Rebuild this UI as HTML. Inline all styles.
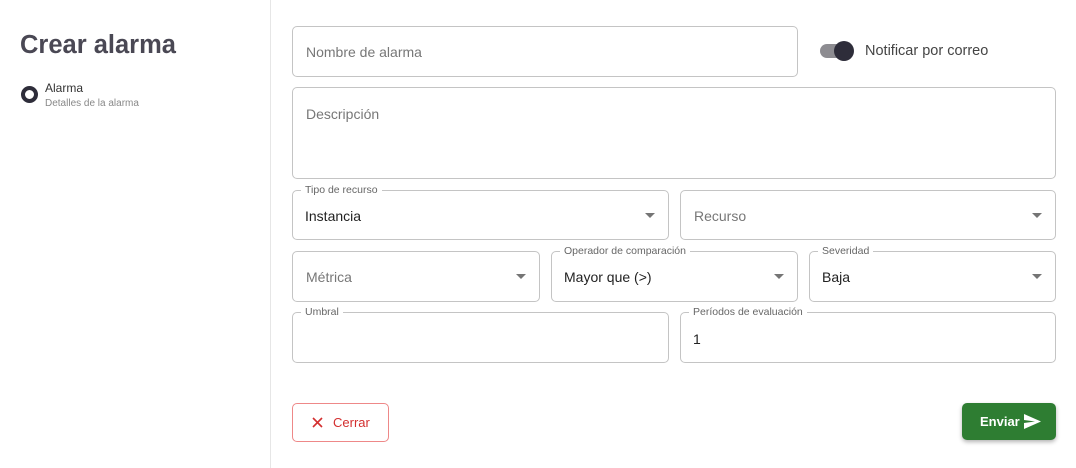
<!DOCTYPE html>
<html><head><meta charset="utf-8"><style>
*{box-sizing:border-box;margin:0;padding:0}
body{width:1076px;height:468px;background:#fff;font-family:"Liberation Sans",sans-serif;position:relative;overflow:hidden;color:#222}
.div{position:absolute;left:270px;top:0;width:1px;height:468px;background:#e6e6e6}
h1{position:absolute;left:20px;top:31px;font-size:25.5px;font-weight:bold;color:#4a4854}
.ring{position:absolute;left:21px;top:86px;width:17px;height:17px;border:4px solid #2e2d3a;border-radius:50%}
.st{position:absolute;left:45px;top:81px;font-size:12px;color:#333}
.sd{position:absolute;left:45px;top:98px;font-size:10px;color:#888}
.f{position:absolute;border:1px solid #c4c4c4;border-radius:5px}
.f .ph{position:absolute;left:13px;font-size:14px;color:#777}
.f .v{position:absolute;left:12px;font-size:14px;color:#222}
.f .lb{position:absolute;left:8px;top:-7px;background:#fff;padding:0 4px;font-size:10.5px;color:#666;line-height:12px}
.f .ar{position:absolute;right:13px;top:22px;width:0;height:0;border-left:5px solid transparent;border-right:5px solid transparent;border-top:5px solid #757575}
.tg{position:absolute;left:820px;top:44px;width:30px;height:14px;border-radius:7px;background:#8d8c91}
.kn{position:absolute;left:834px;top:41px;width:20px;height:20px;border-radius:50%;background:#2e2d3a}
.tl{position:absolute;left:865px;top:43px;font-size:14.5px;color:#444}
.cl{position:absolute;left:292px;top:403px;width:97px;height:39px;border:1px solid #e88;border-radius:5px;color:#d32f2f;font-size:13px}
.en{position:absolute;left:962px;top:403px;width:94px;height:37px;background:#2e7d32;border-radius:5px;color:#fff;font-size:13px;font-weight:bold;box-shadow:0 2px 4px rgba(0,0,0,.3)}
</style></head><body>
<div class="div"></div>
<h1>Crear alarma</h1>
<div class="ring"></div>
<div class="st">Alarma</div>
<div class="sd">Detalles de la alarma</div>

<div class="f" style="left:292px;top:26px;width:506px;height:51px"><span class="ph" style="top:17px">Nombre de alarma</span></div>
<div class="tg"></div><div class="kn"></div><div class="tl">Notificar por correo</div>

<div class="f" style="left:292px;top:87px;width:764px;height:92px"><span class="ph" style="top:18px">Descripción</span></div>

<div class="f" style="left:292px;top:190px;width:377px;height:50px"><span class="lb">Tipo de recurso</span><span class="v" style="top:17px">Instancia</span><span class="ar"></span></div>
<div class="f" style="left:680px;top:190px;width:376px;height:50px"><span class="ph" style="top:17px">Recurso</span><span class="ar"></span></div>

<div class="f" style="left:292px;top:251px;width:248px;height:51px"><span class="ph" style="top:17px">Métrica</span><span class="ar"></span></div>
<div class="f" style="left:551px;top:251px;width:247px;height:51px"><span class="lb">Operador de comparación</span><span class="v" style="top:17px">Mayor que (&gt;)</span><span class="ar"></span></div>
<div class="f" style="left:809px;top:251px;width:247px;height:51px"><span class="lb">Severidad</span><span class="v" style="top:17px">Baja</span><span class="ar"></span></div>

<div class="f" style="left:292px;top:312px;width:377px;height:51px"><span class="lb">Umbral</span></div>
<div class="f" style="left:680px;top:312px;width:376px;height:51px"><span class="lb">Períodos de evaluación</span><span class="v" style="top:18px">1</span></div>

<div class="cl"><svg style="position:absolute;left:19px;top:13px" width="11" height="11" viewBox="0 0 11 11"><path d="M1 1L10 10M10 1L1 10" stroke="#d32f2f" stroke-width="1.6"/></svg><span style="position:absolute;left:40px;top:11px">Cerrar</span></div>
<div class="en"><span style="position:absolute;left:18px;top:11px">Enviar</span><svg style="position:absolute;left:62px;top:11px" width="17" height="15" viewBox="0 0 17 15"><path d="M0 0L17 7.5L0 15L0 9L11 7.5L0 6Z" fill="#fff"/></svg></div>
</body></html>
